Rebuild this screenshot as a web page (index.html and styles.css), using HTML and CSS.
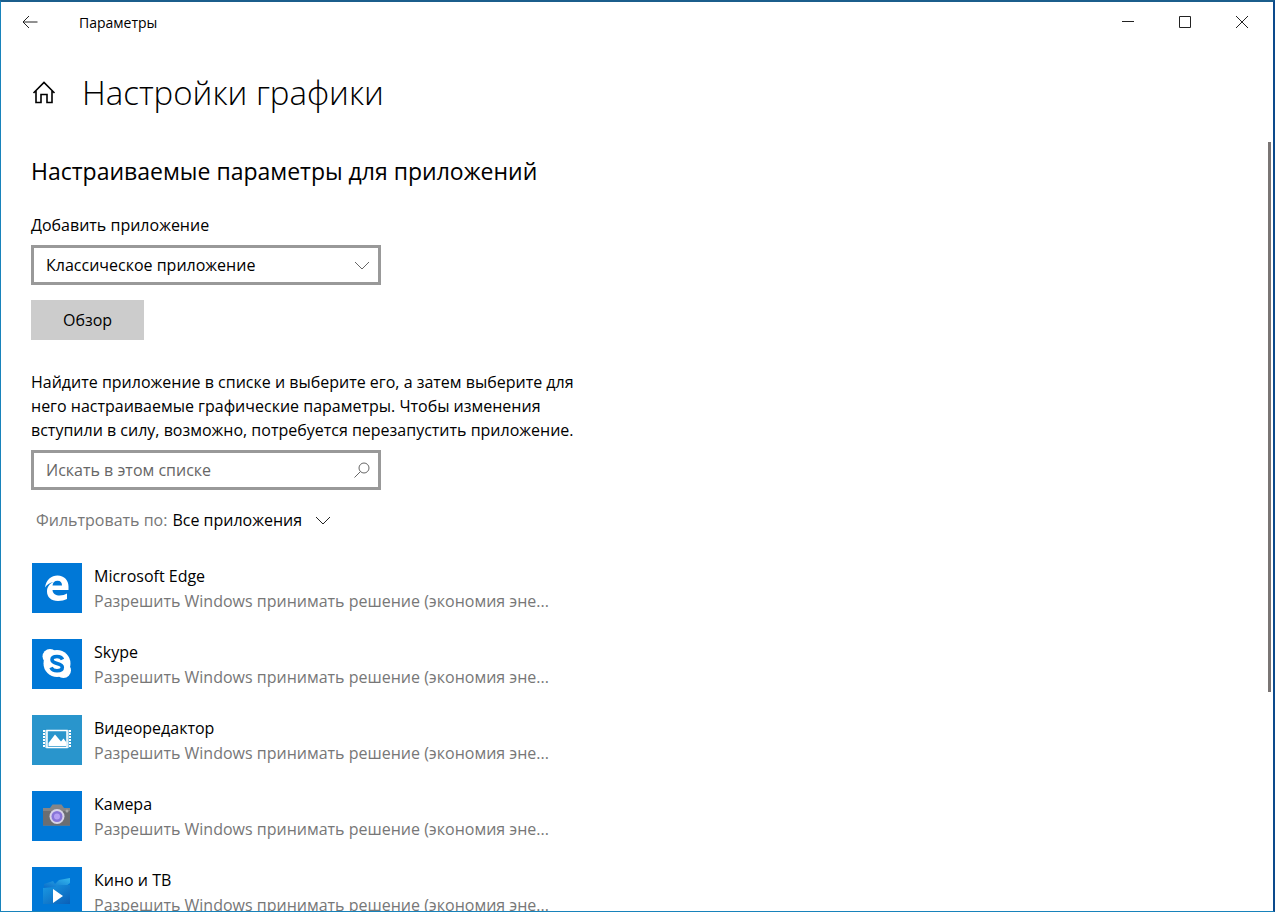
FILE: index.html
```html
<!DOCTYPE html>
<html lang="ru">
<head>
    <meta charset="UTF-8">
    <meta name="viewport" content="width=device-width, initial-scale=1.0">
    <title>Параметры</title>
    <link rel="stylesheet" href="styles.css">
</head>
<body>
    <div class="window">
        <header class="titlebar">
            <button class="back-button" type="button" aria-label="Назад">
                <svg width="16" height="14" viewBox="0 0 16 14"><path d="M15.5 7H1M7 1L1 7l6 6"/></svg>
            </button>
            <span class="titlebar-text">Параметры</span>
            <div class="window-buttons">
                <button type="button" aria-label="Свернуть">
                    <svg width="12" height="12" viewBox="0 0 12 12"><path d="M0 5.5h12"/></svg>
                </button>
                <button type="button" aria-label="Развернуть">
                    <svg width="12" height="12" viewBox="0 0 12 12"><path d="M.5.5h11v11H.5z"/></svg>
                </button>
                <button type="button" aria-label="Закрыть">
                    <svg width="12" height="12" viewBox="0 0 12 12"><path d="M0 0l12 12M12 0L0 12"/></svg>
                </button>
            </div>
        </header>

        <div class="page-header">
            <a href="#" class="home-link" aria-label="Главная">
                <svg width="24" height="24" viewBox="0 0 24 24"><path d="M1.500 13L12 2.500 22.500 13M4 11v11.500h5v-8h6v8h5V11"/></svg>
            </a>
            <h1>Настройки графики</h1>
        </div>

        <div class="scroll-area">
            <main class="content">
                <h2>Настраиваемые параметры для приложений</h2>

                <label class="field-label" for="app-type">Добавить приложение</label>
                <div class="field">
                    <select id="app-type">
                        <option>Классическое приложение</option>
                    </select>
                    <svg class="field-icon" width="16" height="9" viewBox="0 0 16 9"><path d="M1 1l7 7 7-7"/></svg>
                </div>
                <button class="browse-button" type="button">Обзор</button>

                <p class="hint">Найдите приложение в списке и выберите его, а затем выберите для него настраиваемые графические параметры. Чтобы изменения вступили в силу, возможно, потребуется перезапустить приложение.</p>

                <div class="field">
                    <input type="text" placeholder="Искать в этом списке" aria-label="Искать в этом списке">
                    <svg class="field-icon" width="16" height="16" viewBox="0 0 16 16"><circle cx="10" cy="6" r="5"/><path d="M6.500 9.500L.500 15.500"/></svg>
                </div>

                <div class="filter">
                    <label for="filter">Фильтровать по:</label>
                    <select id="filter">
                        <option>Все приложения</option>
                    </select>
                    <svg width="16" height="9" viewBox="0 0 16 9"><path d="M1 1l7 7 7-7"/></svg>
                </div>

                <ul class="apps">
                    <li class="app">
                        <svg class="app-icon" viewBox="0 0 50 50">
                            <path fill="#fff" d="M13 24.500C14 16.500 19.500 12.500 25.500 12.500c7 0 11 5 11 11v3.500H20.500c.3 4 3.500 5.500 7 5.500 3 0 5.500-.8 7.500-2v5.500c-2.500 1.300-5.500 2-9 2-7 0-11-4-11-9.500 0-4.500 2.500-8 6.500-9.500-4 .7-6.500 2.700-8.500 5.500zM20.500 22.500h9.500c0-3-1.500-4.800-4.500-4.800s-4.600 2-5 4.800z"/>
                        </svg>
                        <div class="app-text">
                            <div class="app-name">Microsoft Edge</div>
                            <div class="app-mode">Разрешить Windows принимать решение (экономия эне...</div>
                        </div>
                    </li>
                    <li class="app">
                        <svg class="app-icon" viewBox="0 0 50 50">
                            <circle cx="25" cy="24.500" r="13.500" fill="#fff"/>
                            <circle cx="18" cy="17.500" r="7.500" fill="#fff"/>
                            <circle cx="31.500" cy="31.500" r="7.500" fill="#fff"/>
                            <path fill="none" stroke="#0078d7" stroke-width="3.600" d="M30.500 20.500c-.8-2-2.900-3-5.500-3-3 0-5 1.300-5 3.300 0 4.700 10.300 2.500 10.300 7.500 0 2.300-2.300 3.500-5.300 3.500-2.800 0-5-1.200-6-3.300"/>
                        </svg>
                        <div class="app-text">
                            <div class="app-name">Skype</div>
                            <div class="app-mode">Разрешить Windows принимать решение (экономия эне...</div>
                        </div>
                    </li>
                    <li class="app">
                        <svg class="app-icon app-icon-light" viewBox="0 0 50 50">
                            <path fill="none" stroke="#fff" stroke-width="1.500" d="M15 15.500h20v17H15z"/>
                            <path fill="none" stroke="#fff" stroke-width="2" stroke-dasharray="2 1" d="M12 15v18M38 15v18"/>
                            <path stroke="#fff" d="M14 15v18M36 15v18"/>
                            <path fill="#fff" d="M16.500 31v-3l6.500-8.500 6 7 2.500-3 3 4V31z"/>
                        </svg>
                        <div class="app-text">
                            <div class="app-name">Видеоредактор</div>
                            <div class="app-mode">Разрешить Windows принимать решение (экономия эне...</div>
                        </div>
                    </li>
                    <li class="app">
                        <svg class="app-icon" viewBox="0 0 50 50">
                            <path fill="#858587" d="M11 17h7l2.500-3.500h9L32 17h6v17.500H11z"/>
                            <path fill="#6c6e72" d="M11 20h27v14.500H11z"/>
                            <circle cx="25" cy="25.500" r="7.500" fill="#d8d4e8"/>
                            <circle cx="25" cy="25.500" r="5.500" fill="#8875d8"/>
                            <circle cx="25" cy="25.500" r="3" fill="#b5a0f4"/>
                            <circle cx="35" cy="20" r="1.500" fill="#aaa"/>
                        </svg>
                        <div class="app-text">
                            <div class="app-name">Камера</div>
                            <div class="app-mode">Разрешить Windows принимать решение (экономия эне...</div>
                        </div>
                    </li>
                    <li class="app">
                        <svg class="app-icon" viewBox="0 0 50 50">
                            <defs>
                                <linearGradient id="film" x1="0" y1="1" x2="1" y2="0">
                                    <stop offset="0" stop-color="#0a6cc8"/>
                                    <stop offset="1" stop-color="#35b8ee"/>
                                </linearGradient>
                                <linearGradient id="film-body" x1="0" y1="0" x2="1" y2="1">
                                    <stop offset="0" stop-color="#1a9ae4"/>
                                    <stop offset="1" stop-color="#0a5fb8"/>
                                </linearGradient>
                            </defs>
                            <path fill="url(#film)" d="M12 17l9-3 2 3 4-4 11-2v5l-4 3-22 2z"/>
                            <path fill="url(#film-body)" d="M11 21l12-1 3-2h12v19H11z"/>
                            <path fill="#fff" d="M21 22l10 7-10 7z"/>
                        </svg>
                        <div class="app-text">
                            <div class="app-name">Кино и ТВ</div>
                            <div class="app-mode">Разрешить Windows принимать решение (экономия эне...</div>
                        </div>
                    </li>
                </ul>
            </main>
            <div class="scrollbar"><div class="scrollbar-thumb"></div></div>
        </div>
    </div>
</body>
</html>
```
FILE: styles.css
```css
* {
    box-sizing: border-box;
}

body {
    margin: 0;
    background-color: #fff;
    color: #000;
    font-family: "Open Sans", "Noto Sans", sans-serif;
    font-size: 16px;
}

button,
select,
input {
    font: inherit;
    color: inherit;
    border: none;
    border-radius: 0;
    background: none;
    padding: 0;
    margin: 0;
}

svg {
    display: block;
    fill: none;
    stroke: #222;
}

.window {
    height: 100vh;
    display: flex;
    flex-direction: column;
    overflow: hidden;
    border: 1px solid #1883bb;
    border-top: 2px solid #1b5e8c;
    border-right: 2px solid #0c4a8c;
}

/* Заголовок окна */
.titlebar {
    display: flex;
    align-items: center;
    height: 40px;
    flex-shrink: 0;
}

.back-button {
    display: flex;
    justify-content: center;
    width: 58px;
}

.titlebar-text {
    padding-left: 20px;
    font-size: 14px;
}

.window-buttons {
    display: flex;
    margin-left: auto;
    padding-right: 3px;
}

.window-buttons button {
    display: flex;
    align-items: center;
    justify-content: center;
    width: 57px;
    height: 40px;
}

.page-header {
    display: flex;
    align-items: center;
    gap: 26px;
    height: 100px;
    padding-left: 31px;
    flex-shrink: 0;
}

.home-link svg {
    stroke: #000;
    stroke-width: 1.6;
}

h1 {
    margin: 0;
    font-size: 33px;
    font-weight: 300;
}

.scroll-area {
    display: flex;
    flex: 1;
    min-height: 0;
}

.content {
    flex: 1;
    padding-left: 30px;
    overflow: hidden;
}

h2 {
    margin: 12px 0 25px;
    font-size: 23px;
    font-weight: 400;
    line-height: 34px;
}

.field-label {
    display: block;
    line-height: 24px;
    margin-bottom: 8px;
}

.field {
    position: relative;
    max-width: 350px;
}

.field select,
.field input {
    display: block;
    width: 100%;
    height: 40px;
    padding: 0 40px 0 12px;
    border: 3px solid #999;
    appearance: none;
}

.field input::placeholder {
    color: #666;
    opacity: 1;
}

.field-icon {
    position: absolute;
    top: 0;
    bottom: 0;
    right: 11px;
    margin: auto 0;
    pointer-events: none;
    stroke: #666;
}

.browse-button {
    display: block;
    margin-top: 15px;
    height: 40px;
    padding: 0 32px;
    background-color: #ccc;
}

.hint {
    max-width: 570px;
    margin: 30px 0 8px;
    line-height: 24px;
}

.filter {
    display: flex;
    align-items: center;
    gap: 5px;
    margin: 18px 0 31px;
    padding-left: 5px;
    line-height: 24px;
}

.filter label {
    color: #777;
}

.filter select {
    appearance: none;
    height: 24px;
    margin-right: 8px;
}

/* Список приложений */
.apps {
    list-style: none;
    margin: 0;
    padding: 0 0 0 1px;
}

.app {
    display: flex;
    gap: 12px;
    margin-bottom: 25px;
}

.app-icon {
    width: 50px;
    height: 50px;
    flex-shrink: 0;
    background-color: #0078d7;
    stroke: none;
}

.app-icon-light {
    background-color: #2995cc;
}

.app-text {
    padding-top: 1px;
    line-height: 25px;
    white-space: nowrap;
}

.app-mode {
    color: #777;
}

.scrollbar {
    width: 5px;
}

.scrollbar-thumb {
    width: 3px;
    height: 71.5%;
    background-color: #7a7574;
}
```
